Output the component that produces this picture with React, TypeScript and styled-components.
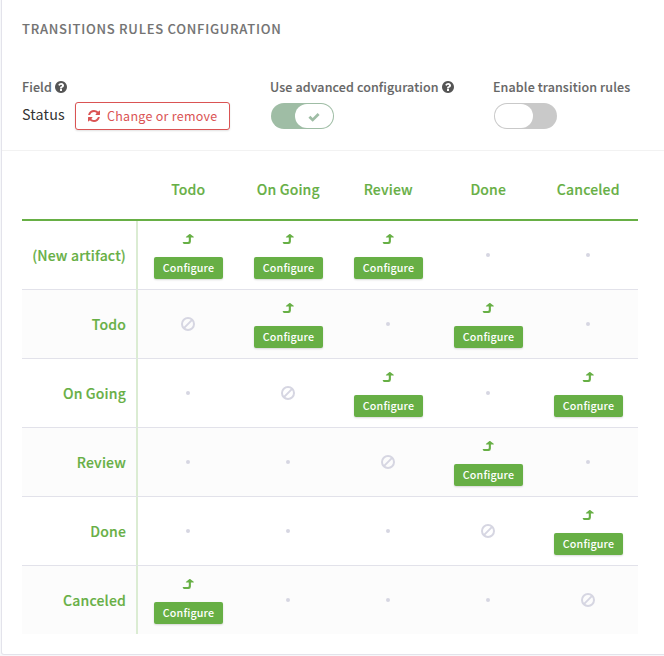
import React from "react";
import styled, { createGlobalStyle, css } from "styled-components";

const GlobalStyle = createGlobalStyle`
  * { box-sizing: border-box; }
  body {
    margin: 0;
    background: #f7f8fa;
    font-family: "Source Sans Pro", "Noto Sans CJK SC", sans-serif;
    overflow: hidden;
  }
`;

const Viewport = styled.main`
  height: 656px;
  overflow: hidden;
  padding-left: 1px;
`;

const Card = styled.section`
  width: 700px;
  height: 655px;
  background: #fff;
  border: 1px solid #e3e3eb;
  border-top: 0;
  border-radius: 0 0 3px 3px;
`;

const Title = styled.h1`
  margin: 0;
  padding: 19px 0 0 20px;
  height: 77px;
  font-size: 13px;
  line-height: 20px;
  font-weight: 500;
  letter-spacing: 0.75px;
  color: #737373;
  -webkit-text-stroke: 0.1px #737373;
  text-transform: uppercase;
  white-space: nowrap;
`;

const Settings = styled.div`
  display: flex;
  height: 74px;
  padding-left: 20px;
  border-bottom: 1px solid #f2f2f2;
`;

const Setting = styled.div<{ $width: number }>`
  flex: none;
  width: ${(p) => p.$width}px;
`;

const Label = styled.div`
  display: flex;
  align-items: center;
  gap: 3px;
  height: 20px;
  font-size: 12.5px;
  line-height: 20px;
  font-weight: 500;
  letter-spacing: 0.11px;
  color: #666;
  -webkit-text-stroke: 0.1px #666;
  white-space: nowrap;
`;

const FieldValue = styled.div`
  display: flex;
  gap: 10px;
  padding-top: 5px;
`;

const FieldName = styled.span`
  width: 43px;
  font-size: 14.3px;
  line-height: 24px;
  letter-spacing: 0.2px;
  color: #333;
  white-space: nowrap;
`;

const ChangeButton = styled.button`
  display: flex;
  align-items: center;
  width: 155px;
  height: 28px;
  padding: 0 0 0 12px;
  gap: 7px;
  font: 400 12.5px/26px "Source Sans Pro", "Noto Sans CJK SC", sans-serif;
  letter-spacing: 0.27px;
  color: #da5353;
  background: #fff;
  border: 1px solid #da5353;
  border-radius: 3px;
  box-shadow: 0 1px 2px rgba(0, 0, 0, 0.12);
  white-space: nowrap;
`;

const Switch = styled.div<{ $on?: boolean }>`
  display: flex;
  justify-content: ${(p) => (p.$on ? "flex-end" : "flex-start")};
  width: 63px;
  height: 26px;
  margin: 6px 0 0 1px;
  padding: 1px;
  border-radius: 13px;
  background: ${(p) => (p.$on ? "#9fbda5" : "#c9c9c9")};
`;

const Knob = styled.span`
  display: flex;
  align-items: center;
  justify-content: center;
  width: 38px;
  height: 24px;
  border-radius: 12px;
  background: #fff;
`;

const Matrix = styled.table`
  width: 616px;
  margin: 8px 0 0 20px;
  table-layout: fixed;
  border-collapse: separate;
  border-spacing: 0;
`;

const labelText = css`
  font-size: 14px;
  line-height: 20px;
  font-weight: 500;
  letter-spacing: 0.17px;
  color: #67af45;
  -webkit-text-stroke: 0.15px #67af45;
  white-space: nowrap;
`;

const Head = styled.th<{ $first?: boolean }>`
  ${labelText}
  width: ${(p) => (p.$first ? 116 : 100)}px;
  height: 62px;
  padding: 0 0 0 0.5px;
  border-bottom: 2px solid #67af45;
  text-align: center;
`;

const Row = styled.tr`
  height: 69px;
  &:nth-child(even) {
    background: #fcfcfc;
  }
  & > * {
    border-bottom: 1px solid #e2e2ea;
  }
  &:last-child {
    height: 68px;
  }
  &:last-child > * {
    border-bottom: 0;
  }
`;

const RowHead = styled.th`
  ${labelText}
  padding: 0 10px 0 0;
  border-right: 2px solid #dbecd3;
  text-align: right;
`;

const Cell = styled.td`
  padding: 0;
  vertical-align: middle;
`;

const CellContent = styled.div<{ $allowed: boolean }>`
  display: flex;
  flex-direction: column;
  align-items: center;
  justify-content: center;
  height: 68px;
  padding-top: ${(p) => (p.$allowed ? 2 : 0)}px;
  color: #67af45;
`;

const ConfigureButton = styled.button`
  width: 69px;
  height: 22px;
  margin: 13px 0 0 1px;
  padding: 0;
  border: 0;
  border-radius: 2px;
  background: #67af45;
  box-shadow: 0 1px 2px rgba(0, 0, 0, 0.15);
  color: #fff;
  font: 500 10.7px/21px "Source Sans Pro", "Noto Sans CJK SC", sans-serif;
  letter-spacing: 0.15px;
`;

const Dot = styled.span`
  width: 4px;
  height: 4px;
  border-radius: 50%;
  background: #d6d6e2;
`;

const HelpIcon = () => (
  <svg width="12" height="12" viewBox="0 0 1536 1536" fill="#555">
    <path d="M896 1248v-192q0-14-9-23t-23-9h-192q-14 0-23 9t-9 23v192q0 14 9 23t23 9h192q14 0 23-9t9-23zm256-672q0-88-55.5-163t-138.5-116-170-41q-243 0-371 213-15 24 8 42l132 100q7 6 19 6 16 0 25-12 53-68 86-92 34-24 86-24 48 0 85.5 26t37.5 59q0 38-20 61t-68 45q-63 28-115.5 86.5t-52.5 125.5v36q0 14 9 23t23 9h192q14 0 23-9t9-23q0-19 21.5-49.5t54.5-49.5q32-18 49-28.5t46-35 44.5-48 28-60.5 12.5-81zm384 192q0 209-103 385.5t-279.5 279.5-385.5 103-385.5-103-279.5-279.5-103-385.5 103-385.5 279.5-279.5 385.5-103 385.5 103 279.5 279.5 103 385.5z" />
  </svg>
);

const RefreshIcon = () => (
  <svg width="12" height="12" viewBox="0 0 1536 1536" fill="currentColor">
    <path d="M1511 928q0 5-1 7-64 268-268 434.5t-478 166.5q-146 0-282.5-55t-243.5-157l-129 129q-19 19-45 19t-45-19-19-45v-448q0-26 19-45t45-19h448q26 0 45 19t19 45-19 45l-137 137q71 66 161 102t187 36q134 0 250-65t186-179q11-17 53-117 8-23 30-23h192q13 0 22.5 9.5t9.5 22.5zm25-800v448q0 26-19 45t-45 19h-448q-26 0-45-19t-19-45 19-45l138-138q-148-137-349-137-134 0-250 65t-186 179q-11 17-53 117-8 23-30 23h-199q-13 0-22.5-9.5t-9.5-22.5v-7q65-268 270-434.5t480-166.5q146 0 284 55.5t245 156.5l130-129q19-19 45-19t45 19 19 45z" />
  </svg>
);

const CheckIcon = () => (
  <svg width="12" height="12" viewBox="0 0 12 12" fill="none" stroke="#9fbda5" strokeWidth="2.8">
    <path d="M1.4 6.7 4.7 9.9 10.6 4.1" />
  </svg>
);

const ArrowIcon = () => (
  <svg width="12" height="10" viewBox="0 0 12 10" fill="currentColor">
    <path d="M0.9 8H5.7Q6.8 8 6.8 6.9V3.6H4.1Q3.7 3.2 4.1 2.8L7.5 .1Q7.8-.1 8.1 .1L11.7 2.8Q12 3.6 11.5 3.6H8.9V7.5Q8.9 10 6.5 10H2.1Q1.7 10 1.5 9.7L.7 8.6Q.6 8 .9 8Z" />
  </svg>
);

const ForbiddenIcon = () => (
  <svg width="14" height="14" viewBox="0 0 14 14" fill="none" stroke="#d6d6e2" strokeWidth="2">
    <circle cx="7" cy="7" r="6" />
    <path d="M2.9 11.1 11.1 2.9" />
  </svg>
);

const states = ["Todo", "On Going", "Review", "Done", "Canceled"];

const transitions: { from: string; to: string[] }[] = [
  { from: "(New artifact)", to: ["Todo", "On Going", "Review"] },
  { from: "Todo", to: ["On Going", "Done"] },
  { from: "On Going", to: ["Review", "Canceled"] },
  { from: "Review", to: ["Done"] },
  { from: "Done", to: ["Canceled"] },
  { from: "Canceled", to: ["Todo"] },
];

function TransitionCell({ from, to, allowed }: { from: string; to: string; allowed: boolean }) {
  return (
    <Cell>
      <CellContent $allowed={allowed}>
        {from === to ? (
          <ForbiddenIcon />
        ) : allowed ? (
          <>
            <ArrowIcon />
            <ConfigureButton>Configure</ConfigureButton>
          </>
        ) : (
          <Dot />
        )}
      </CellContent>
    </Cell>
  );
}

export default function App() {
  return (
    <Viewport>
      <GlobalStyle />
      <Card>
        <Title>Transitions rules configuration</Title>
        <Settings>
          <Setting $width={248}>
            <Label>
              Field <HelpIcon />
            </Label>
            <FieldValue>
              <FieldName>Status</FieldName>
              <ChangeButton>
                <RefreshIcon />
                Change or remove
              </ChangeButton>
            </FieldValue>
          </Setting>
          <Setting $width={223}>
            <Label>
              Use advanced configuration <HelpIcon />
            </Label>
            <Switch $on>
              <Knob>
                <CheckIcon />
              </Knob>
            </Switch>
          </Setting>
          <Setting $width={170}>
            <Label>Enable transition rules</Label>
            <Switch>
              <Knob />
            </Switch>
          </Setting>
        </Settings>
        <Matrix>
          <thead>
            <tr>
              <Head $first />
              {states.map((s) => (
                <Head key={s}>{s}</Head>
              ))}
            </tr>
          </thead>
          <tbody>
            {transitions.map((t) => (
              <Row key={t.from}>
                <RowHead>{t.from}</RowHead>
                {states.map((s) => (
                  <TransitionCell key={s} from={t.from} to={s} allowed={t.to.includes(s)} />
                ))}
              </Row>
            ))}
          </tbody>
        </Matrix>
      </Card>
    </Viewport>
  );
}
